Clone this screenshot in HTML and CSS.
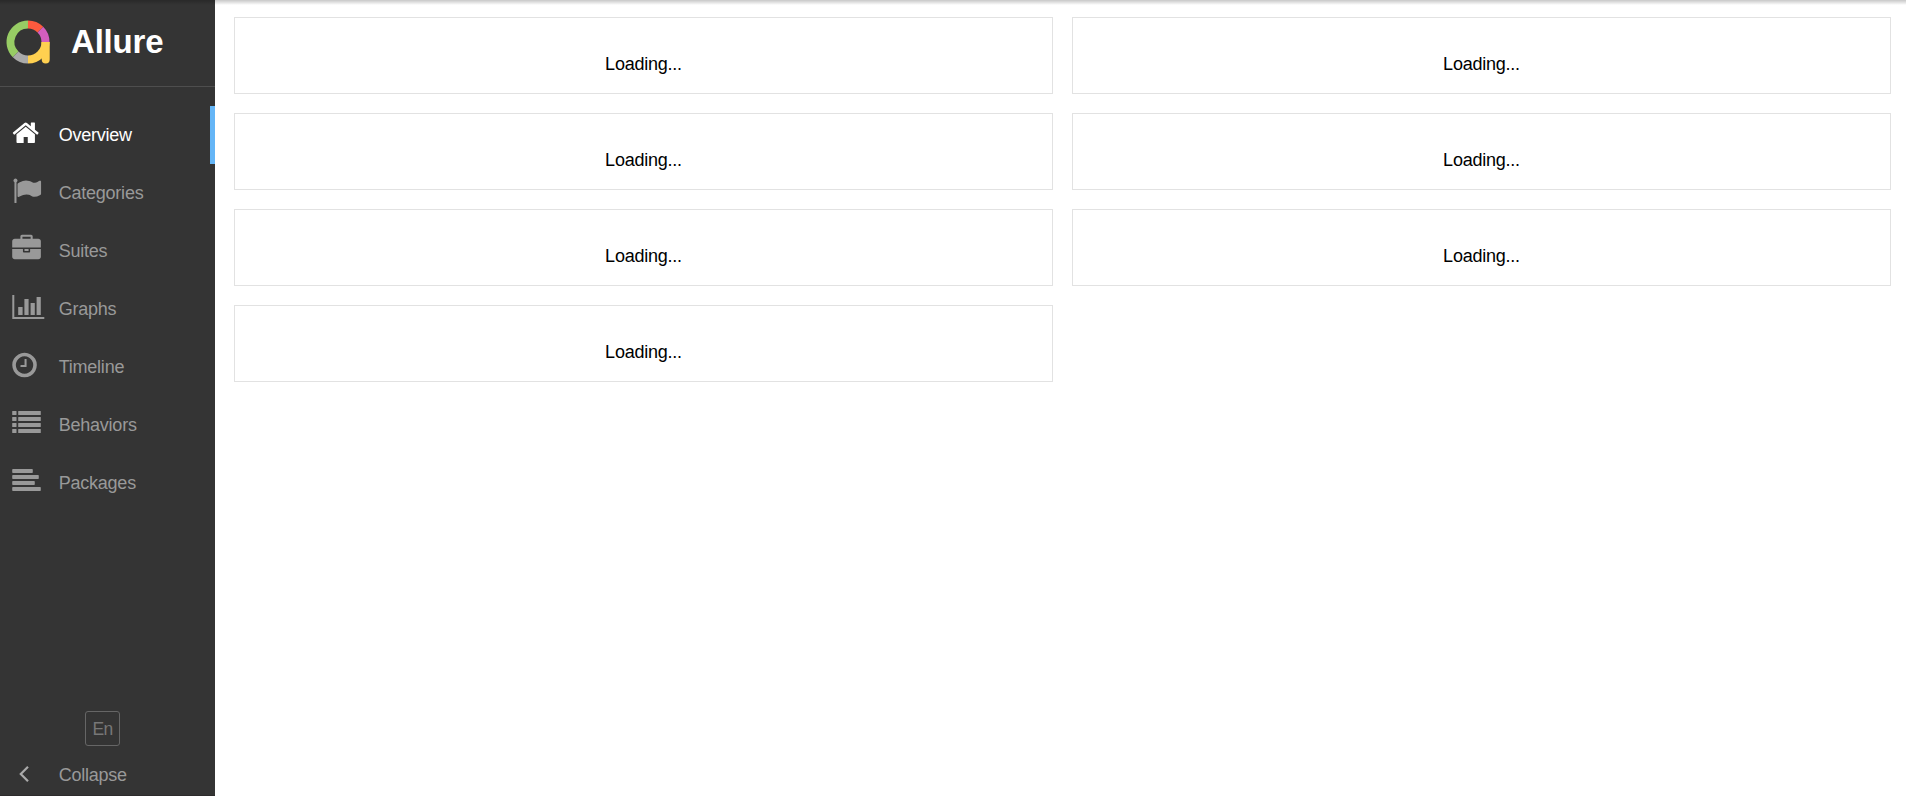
FILE: index.html
```html
<!DOCTYPE html>
<html lang="en">
<head>
<meta charset="utf-8">
<title>Allure Report</title>
<link rel="stylesheet" href="styles.css">
</head>
<body>
<div class="app">
  <aside class="side-nav">
    <div class="brand">
      <svg class="brand-logo" width="46" height="46" viewBox="-23 -23 46 46" fill="none" stroke-width="8">
        <path stroke="#97cc64" d="M-12.37 12.37A17.5 17.5 0 0 1 0 -17.5"/>
        <path stroke="#fd5a3e" d="M0 -17.5A17.5 17.5 0 0 1 12.37 -12.37"/>
        <path stroke="#d35ebe" d="M12.37 -12.37A17.5 17.5 0 0 1 17.5 0"/>
        <path stroke="#aaa" d="M0 17.5A17.5 17.5 0 0 1 -12.37 12.37"/>
        <path stroke="#ffd050" d="M17.5 0A17.5 17.5 0 0 1 0 17.5"/>
        <path fill="#ffd050" d="M13.5 0H21.7V17.5A4 4 0 0 1 13.7 17.5Z"/>
      </svg>
      <span class="brand-text">Allure</span>
    </div>
    <ul class="menu">
      <li class="menu-item menu-item-active">
        <svg class="icon" viewBox="0 0 48 58"><path transform="translate(12.4 12.5) scale(.016)" d="M1408 992v480q0 26-19 45t-45 19h-384v-384h-256v384h-384q-26 0-45-19t-19-45v-480q0-1 .5-3t.5-3l575-474 575 474q1 2 1 6zm223-69l-62 74q-8 9-21 11h-3q-13 0-21-7l-692-577-692 577q-12 8-24 7-13-2-21-11l-62-74q-8-10-7-23.5t11-21.5l719-599q32-26 76-26t76 26l244 204v-195q0-14 9-23t23-9h192q14 0 23 9t9 23v408l219 182q10 8 11 21.5t-7 23.5z"/></svg>
        <span>Overview</span>
      </li>
      <li class="menu-item">
        <svg class="icon" viewBox="0 0 48 58"><path transform="translate(12.4 12.5) scale(.016)" d="M320 256q0 72-64 110v1266q0 13-9.5 22.5t-22.5 9.5h-64q-13 0-22.5-9.5t-9.5-22.5v-1266q-64-38-64-110 0-53 37.5-90.5t90.5-37.5 90.5 37.5 37.5 90.5zm1472 64v763q0 25-12.5 38.5t-39.5 27.5q-215 116-369 116-61 0-123.5-22t-108.5-48-115.5-48-142.5-22q-192 0-464 146-17 9-33 9-26 0-45-19t-19-45v-742q0-32 31-55 21-14 79-43 236-120 421-120 107 0 200 29t219 88q38 19 88 19 54 0 117.5-21t110-47 88-47 54.5-21q26 0 45 19t19 45z"/></svg>
        <span>Categories</span>
      </li>
      <li class="menu-item">
        <svg class="icon" viewBox="0 0 48 58"><path transform="translate(12.2 12.7) scale(.016)" d="M640 256h512v-128h-512v128zm1152 640v480q0 66-47 113t-113 47h-1472q-66 0-113-47t-47-113v-480h672v160q0 26 19 45t45 19h320q26 0 45-19t19-45v-160h672zm-768 0v128h-256v-128h256zm768-480v384h-1792v-384q0-66 47-113t113-47h352v-160q0-40 28-68t68-28h576q40 0 68 28t28 68v160h352q66 0 113 47t47 113z"/></svg>
        <span>Suites</span>
      </li>
      <li class="menu-item">
        <svg class="icon" viewBox="0 0 48 58"><path d="M12.3 15h2v22h30v2h-32zM18.2 27h4.4v8h-4.4zM24.4 19h4.2v16h-4.2zM30.6 23h4.2v12h-4.2zM36.6 17h4.2v18h-4.2z"/></svg>
        <span>Graphs</span>
      </li>
      <li class="menu-item">
        <svg class="icon" viewBox="0 0 48 58"><path transform="translate(10.2 12.7) scale(.016)" d="M1024 544v448q0 14-9 23t-23 9h-320q-14 0-23-9t-9-23v-64q0-14 9-23t23-9h224v-352q0-14 9-23t23-9h64q14 0 23 9t9 23zm416 352q0-148-73-273t-198-198-273-73-273 73-198 198-73 273 73 273 198 198 273 73 273-73 198-198 73-273zm224 0q0 209-103 385.5t-279.5 279.5-385.5 103-385.5-103-279.5-279.5-103-385.5 103-385.5 279.5-279.5 385.5-103 385.5 103 279.5 279.5 103 385.5z"/></svg>
        <span>Timeline</span>
      </li>
      <li class="menu-item">
        <svg class="icon" viewBox="0 0 48 58">
          <rect x="12.2" y="15" width="4.3" height="4" rx=".5"/><rect x="18.2" y="15" width="22.6" height="4" rx=".5"/>
          <rect x="12.2" y="21" width="4.3" height="4" rx=".5"/><rect x="18.2" y="21" width="22.6" height="4" rx=".5"/>
          <rect x="12.2" y="27" width="4.3" height="4" rx=".5"/><rect x="18.2" y="27" width="22.6" height="4" rx=".5"/>
          <rect x="12.2" y="33" width="4.3" height="4" rx=".5"/><rect x="18.2" y="33" width="22.6" height="4" rx=".5"/>
        </svg>
        <span>Behaviors</span>
      </li>
      <li class="menu-item">
        <svg class="icon" viewBox="0 0 48 58">
          <rect x="12.2" y="15" width="20.6" height="4" rx=".8"/>
          <rect x="12.2" y="21" width="26.6" height="4" rx=".8"/>
          <rect x="12.2" y="27" width="22.6" height="4" rx=".8"/>
          <rect x="12.2" y="33" width="28.6" height="4" rx=".8"/>
        </svg>
        <span>Packages</span>
      </li>
    </ul>
    <div class="side-footer">
      <button class="language">En</button>
      <div class="collapse">
        <svg class="icon-collapse" viewBox="0 0 48 40"><path d="M28 11.8L20.8 19L28 26.2"/></svg>
        <span>Collapse</span>
      </div>
    </div>
  </aside>
  <main class="content">
    <div class="column">
      <section class="widget">Loading...</section>
      <section class="widget">Loading...</section>
      <section class="widget">Loading...</section>
      <section class="widget">Loading...</section>
    </div>
    <div class="column">
      <section class="widget">Loading...</section>
      <section class="widget">Loading...</section>
      <section class="widget">Loading...</section>
    </div>
  </main>
  <div class="top-shadow"></div>
</div>
</body>
</html>
```

FILE: styles.css
```css
* {
  box-sizing: border-box;
}

body {
  margin: 0;
  background: #fff;
  color: #000;
  font: 18px/22px "Liberation Sans", Arial, sans-serif;
  letter-spacing: -0.23px;
}

.app {
  position: relative;
  display: flex;
  height: 796px;
  overflow: hidden;
}

.side-nav {
  display: flex;
  flex: none;
  flex-direction: column;
  width: 215px;
  background: #343434;
  border-bottom: 1px solid #2d2b2c;
  color: #999;
}

.brand {
  display: flex;
  align-items: center;
  height: 87px;
  padding: 0 0 2px 5px;
  border-bottom: 1px solid #4e4e4e;
}

.brand-logo {
  flex: none;
}

.brand-text {
  margin: -1px 0 0 20px;
  color: #fff;
  font-size: 33px;
  font-weight: bold;
  line-height: 40px;
  letter-spacing: -0.2px;
}

.menu {
  margin: 0;
  padding: 19px 0 0;
  list-style: none;
}

.menu-item {
  display: flex;
  align-items: center;
  height: 58px;
}

.menu-item-active {
  border-right: 5px solid #64b5f6;
  color: #fff;
}

.icon {
  flex: none;
  width: 48px;
  height: 58px;
  margin-right: 10.7px;
  fill: currentColor;
}

.side-footer {
  display: flex;
  flex-direction: column;
  margin-top: auto;
}

.language {
  width: 35px;
  height: 35px;
  margin: 0 0 10px 85px;
  padding: 0;
  border: 1px solid #666;
  border-radius: 3px;
  background: none;
  color: #777;
  font: inherit;
  font-size: 17.5px;
  letter-spacing: -0.6px;
}

.collapse {
  display: flex;
  align-items: center;
  height: 38px;
  margin-bottom: 1px;
}

.icon-collapse {
  flex: none;
  width: 48px;
  height: 40px;
  margin-right: 10.7px;
  fill: none;
  stroke: #aaa;
  stroke-width: 2.2;
}

.content {
  display: flex;
  flex: 1;
  gap: 19px;
  padding: 17px 15px 0 19px;
}

.column {
  display: flex;
  flex: 1;
  flex-direction: column;
  gap: 19px;
}

.widget {
  height: 77px;
  padding-top: 35px;
  border: 1px solid #e2e2e2;
  text-align: center;
}

.top-shadow {
  position: absolute;
  top: 0;
  left: 0;
  width: 100%;
  height: 5px;
  background: linear-gradient(rgba(0, 0, 0, 0.22), rgba(0, 0, 0, 0));
}
```
